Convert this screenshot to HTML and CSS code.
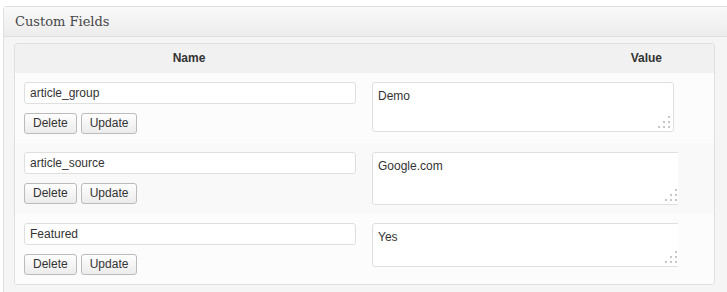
FILE: index.html
```html
<!DOCTYPE html>
<html lang="en">
<head>
<meta charset="utf-8">
<title>Custom Fields</title>
<link rel="stylesheet" href="styles.css">
</head>
<body>
<div class="postbox">
  <h3 class="hndle">Custom Fields</h3>
  <div class="inside">
    <div class="fields">
      <div class="fields-head">
        <div class="th th-name">Name</div>
        <div class="th th-value">Value</div>
      </div>

      <div class="field-row">
        <div class="key-cell">
          <input class="key" type="text" value="article_group">
          <div class="actions"><button class="btn">Delete</button><button class="btn">Update</button></div>
        </div>
        <div class="value-cell">
          <div class="value-clip">
            <div class="value-wrap ta-1">
              <textarea class="value">Demo</textarea>
              <svg class="grip" width="12" height="12" viewBox="0 0 12 12"><rect x="10" y="0" width="2" height="2"/><rect x="5" y="5" width="2" height="2"/><rect x="10" y="5" width="2" height="2"/><rect x="0" y="10" width="2" height="2"/><rect x="5" y="10" width="2" height="2"/><rect x="10" y="10" width="2" height="2"/></svg>
            </div>
          </div>
        </div>
      </div>

      <div class="field-row alt">
        <div class="key-cell">
          <input class="key" type="text" value="article_source">
          <div class="actions"><button class="btn">Delete</button><button class="btn">Update</button></div>
        </div>
        <div class="value-cell">
          <div class="value-clip">
            <div class="value-wrap ta-2">
              <textarea class="value">Google.com</textarea>
              <svg class="grip" width="12" height="12" viewBox="0 0 12 12"><rect x="10" y="0" width="2" height="2"/><rect x="5" y="5" width="2" height="2"/><rect x="10" y="5" width="2" height="2"/><rect x="0" y="10" width="2" height="2"/><rect x="5" y="10" width="2" height="2"/><rect x="10" y="10" width="2" height="2"/></svg>
            </div>
          </div>
        </div>
      </div>

      <div class="field-row">
        <div class="key-cell">
          <input class="key" type="text" value="Featured">
          <div class="actions"><button class="btn">Delete</button><button class="btn">Update</button></div>
        </div>
        <div class="value-cell">
          <div class="value-clip">
            <div class="value-wrap ta-3">
              <textarea class="value">Yes</textarea>
              <svg class="grip" width="12" height="12" viewBox="0 0 12 12"><rect x="10" y="0" width="2" height="2"/><rect x="5" y="5" width="2" height="2"/><rect x="10" y="5" width="2" height="2"/><rect x="0" y="10" width="2" height="2"/><rect x="5" y="10" width="2" height="2"/><rect x="10" y="10" width="2" height="2"/></svg>
            </div>
          </div>
        </div>
      </div>
    </div>
  </div>
</div>
</body>
</html>
```
FILE: styles.css
```css
html, body {
  margin: 0;
  padding: 0;
  background: #ffffff;
  overflow: hidden;
}

body {
  font-family: "Liberation Sans", Arial, sans-serif;
  font-size: 12px;
  color: #333333;
}

.postbox {
  margin: 6px 0 0 3px;
  width: 740px;
  border: 1px solid #dfdfdf;
  border-radius: 3px 0 0 3px;
  background: #f5f5f5;
}

.hndle {
  margin: 0;
  height: 29px;
  line-height: 29px;
  padding-left: 11px;
  font-family: "DejaVu Serif", "Liberation Serif", serif;
  font-size: 13px;
  font-weight: normal;
  color: #464646;
  background: linear-gradient(#f9f9f9, #ececec);
  border-bottom: 1px solid #dfdfdf;
}

.inside {
  padding: 6px 0 10px 10px;
}

.fields {
  box-sizing: border-box;
  width: 701px;
  border: 1px solid #dfdfdf;
  border-radius: 3px;
  background: #fcfcfc;
  overflow: hidden;
}

.fields-head {
  display: grid;
  grid-template-columns: 348px 1fr;
  height: 29px;
  line-height: 29px;
  background: #f1f1f1;
  font-weight: bold;
  font-size: 12px;
  color: #333333;
}

.th-name {
  text-align: center;
}

.th-value {
  text-align: right;
  padding-right: 52px;
}

.field-row {
  display: grid;
  grid-template-columns: 348px 1fr;
  height: 70px;
  background: #fcfcfc;
}

.field-row.alt {
  height: 71px;
  background: #f9f9f9;
}

.key-cell {
  display: flex;
  flex-direction: column;
  align-items: flex-start;
  gap: 9px;
  padding: 9px 7px 0 9px;
}

.key {
  box-sizing: border-box;
  width: 332px;
  height: 22px;
  margin: 0;
  padding: 0 5px;
  border: 1px solid #dfdfdf;
  border-radius: 3px;
  background: #ffffff;
  font-family: "Liberation Sans", Arial, sans-serif;
  font-size: 12px;
  color: #333333;
  outline: none;
}

.actions {
  display: flex;
  gap: 4px;
}

.btn {
  box-sizing: border-box;
  height: 21px;
  margin: 0;
  padding: 0 8px;
  border: 1px solid #bbbbbb;
  border-radius: 3px;
  background: linear-gradient(#fefefe, #ececec);
  font-family: "Liberation Sans", Arial, sans-serif;
  font-size: 12px;
  color: #333333;
  line-height: 19px;
}

.value-cell {
  padding: 9px 0 0 9px;
}

.value-clip {
  width: 306px;
  overflow: hidden;
}

.value-wrap {
  position: relative;
  width: 302px;
}

.value-wrap.ta-2,
.value-wrap.ta-3 {
  width: 309px;
}

.value {
  display: block;
  box-sizing: border-box;
  width: 100%;
  height: 50px;
  margin: 0;
  padding: 6px 5px;
  border: 1px solid #dfdfdf;
  border-radius: 3px;
  background: #ffffff;
  font-family: "Liberation Sans", Arial, sans-serif;
  font-size: 12px;
  line-height: 15px;
  color: #333333;
  resize: none;
  overflow: hidden;
  outline: none;
}

.ta-2 .value {
  height: 53px;
}

.ta-3 .value {
  height: 44px;
}

.grip {
  position: absolute;
  right: 4px;
  bottom: 4px;
  fill: #c6c6c6;
}
```
